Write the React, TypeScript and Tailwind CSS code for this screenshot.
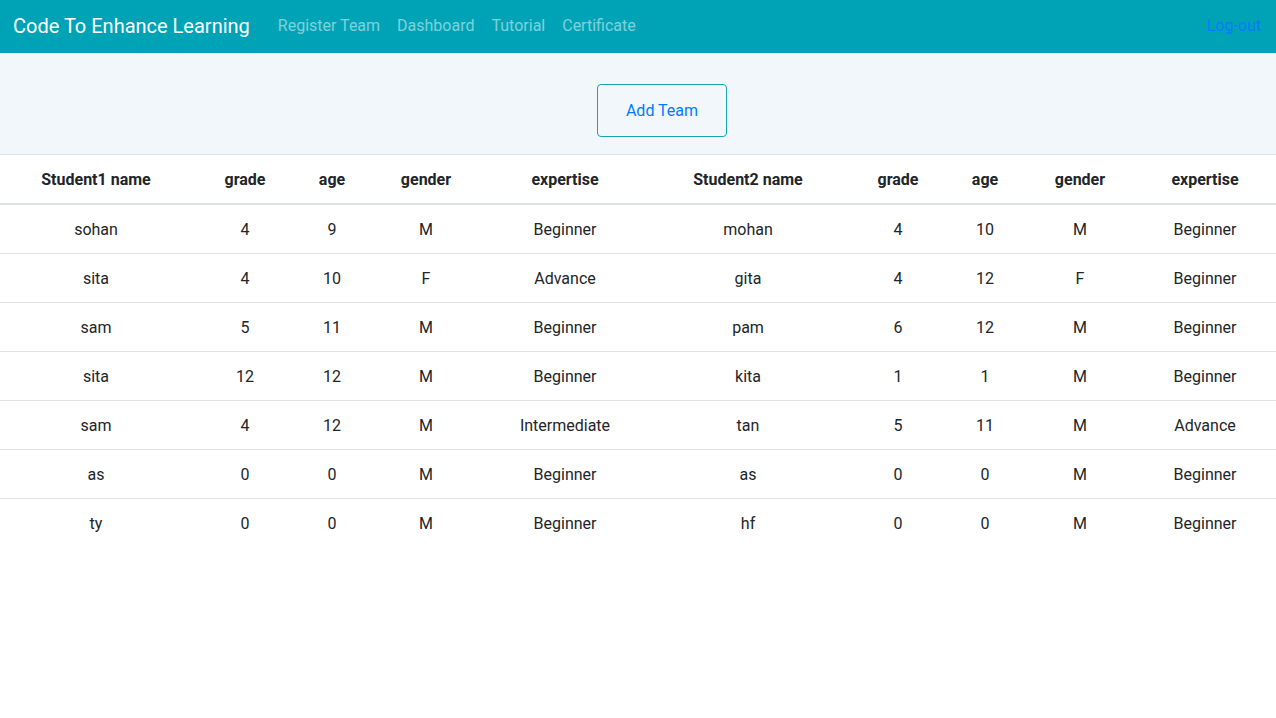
import React from 'react';

type Row = [string, string, string, string, string, string, string, string, string, string];

const rows: Row[] = [
  ['sohan', '4', '9', 'M', 'Beginner', 'mohan', '4', '10', 'M', 'Beginner'],
  ['sita', '4', '10', 'F', 'Advance', 'gita', '4', '12', 'F', 'Beginner'],
  ['sam', '5', '11', 'M', 'Beginner', 'pam', '6', '12', 'M', 'Beginner'],
  ['sita', '12', '12', 'M', 'Beginner', 'kita', '1', '1', 'M', 'Beginner'],
  ['sam', '4', '12', 'M', 'Intermediate', 'tan', '5', '11', 'M', 'Advance'],
  ['as', '0', '0', 'M', 'Beginner', 'as', '0', '0', 'M', 'Beginner'],
  ['ty', '0', '0', 'M', 'Beginner', 'hf', '0', '0', 'M', 'Beginner'],
];

const headers = ['Student1 name', 'grade', 'age', 'gender', 'expertise', 'Student2 name', 'grade', 'age', 'gender', 'expertise'];
const widths = ['w-[192px]', 'w-[106px]', 'w-[68px]', 'w-[120px]', 'w-[158px]', 'w-[208px]', 'w-[92px]', 'w-[82px]', 'w-[108px]', 'w-[142px]'];

export default function App() {
  return (
    <div className="min-h-[718px] bg-white text-[#212529]" style={{ fontFamily: 'Roboto, "Liberation Sans", sans-serif' }}>
      {/* navbar */}
      <nav className="h-[53px] bg-[#00a3b6] flex items-center pl-[13px] pr-[15px] pb-[2px]">
        <span className="text-white text-[20px] mr-[20px]">Code To Enhance Learning</span>
        <div className="flex text-[16px] text-white/50 gap-[1px]">
          <a className="px-2">Register Team</a>
          <a className="px-2">Dashboard</a>
          <a className="px-2">Tutorial</a>
          <a className="px-2">Certificate</a>
        </div>
        <a className="ml-auto text-[16px] text-[#007bff]">Log-out</a>
      </nav>

      <div className="h-[102px] bg-[#f2f7fb] flex justify-center pt-[31px] pl-[48px] border-b border-[#dee2e6]">
        <button className="w-[130px] h-[53px] border border-[#17a2b8] rounded-[4px] text-[#007bff] text-[16px] bg-transparent">
          Add Team
        </button>
      </div>

      <table className="w-full border-collapse table-fixed text-[16px]">
        <thead>
          <tr>
            {headers.map((h, i) => (
              <th key={i} className={`${widths[i]} h-[49px] pt-[2px] text-center font-bold border-b-2 border-[#dee2e6] align-middle`}>
                {h}
              </th>
            ))}
          </tr>
        </thead>
        <tbody>
          {rows.map((r, i) => (
            <tr key={i}>
              {r.map((c, j) => (
                <td key={j} className={`h-[49px] pt-[2px] text-center align-middle ${i > 0 ? 'border-t border-[#dee2e6]' : ''}`}>
                  {c}
                </td>
              ))}
            </tr>
          ))}
        </tbody>
      </table>
    </div>
  );
}
